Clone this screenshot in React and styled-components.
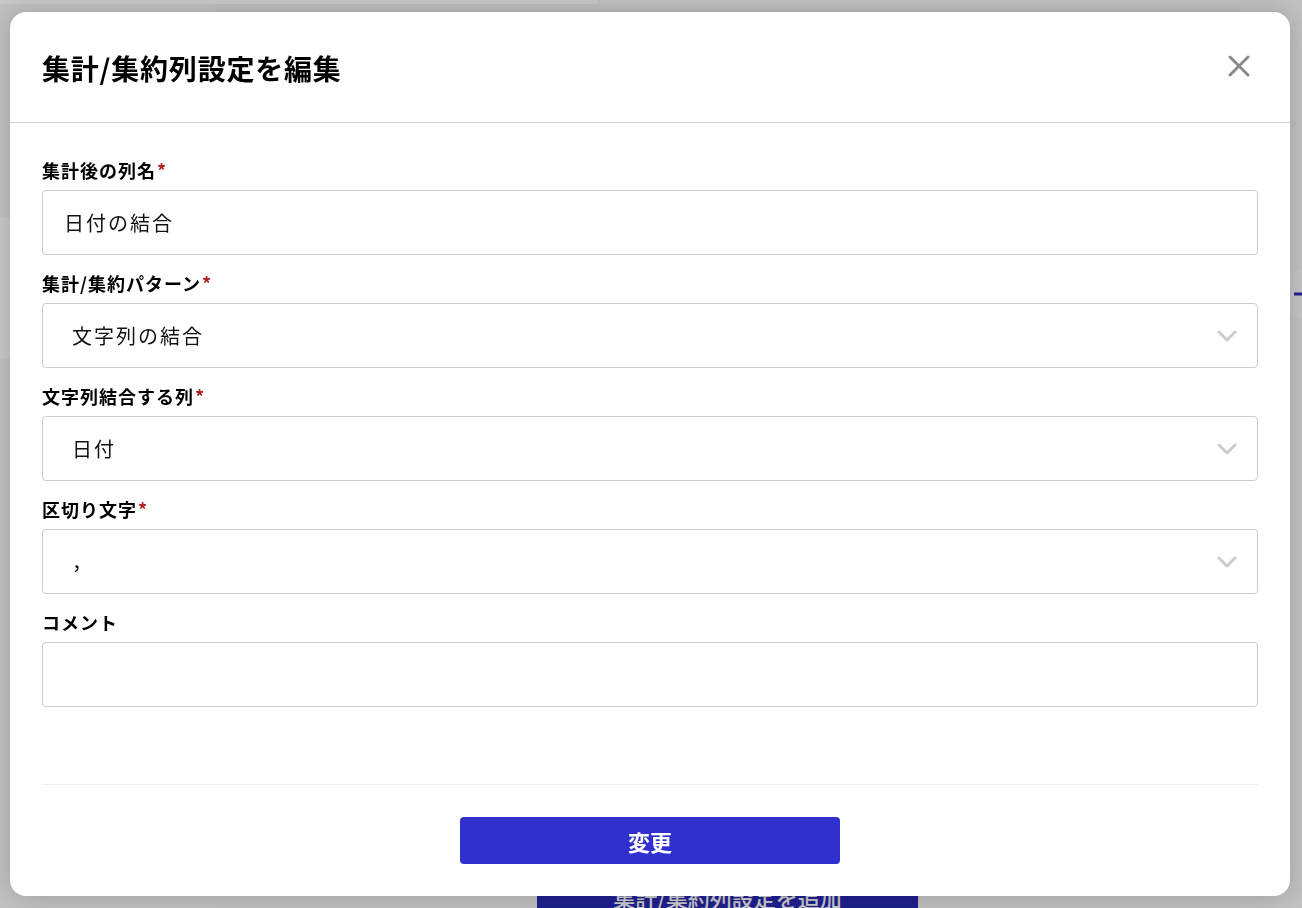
import React from "react";
import styled, { createGlobalStyle } from "styled-components";

const GlobalStyle = createGlobalStyle`
  html, body {
    margin: 0;
    padding: 0;
    font-family: "Noto Sans CJK JP", "Noto Sans", sans-serif;
    color: #111;
  }
  * {
    box-sizing: border-box;
  }
`;

/* page behind the dialog */
const Page = styled.div`
  position: relative;
  width: 1302px;
  height: 908px;
  overflow: hidden;
  background: #f6f6f6;
  display: flex;
  flex-direction: column;
`;

const TopCard = styled.div`
  width: 598px;
  height: 4px;
  background: #fff;
  border-bottom-right-radius: 8px;
`;

const PageBody = styled.div`
  flex: 1;
  display: flex;
`;

const Sidebar = styled.div`
  width: 215px;
  padding-top: 214px;
`;

const SideRow = styled.div`
  height: 140px;
  background: #fff;
`;

const Main = styled.div`
  flex: 1;
  display: flex;
  flex-direction: column;
  align-items: center;
  justify-content: flex-end;
  margin-right: 62px;
  background: #f3f3f3;
`;

const AddButton = styled.button`
  width: 381px;
  height: 46px;
  margin-bottom: -12px;
  border: none;
  border-radius: 4px;
  background: #2828b4;
  color: #fff;
  font-family: inherit;
  font-size: 22px;
  font-weight: 500;
`;

const RoundButton = styled.div`
  position: absolute;
  right: -26px;
  top: 270px;
  width: 48px;
  height: 48px;
  border-radius: 50%;
  background: #fafafa;
  display: flex;
  align-items: center;
  justify-content: center;
`;

/* dialog */
const Overlay = styled.div`
  position: fixed;
  inset: 0;
  padding-right: 2px;
  background: rgba(0, 0, 0, 0.22);
  display: flex;
  align-items: center;
  justify-content: center;
`;

const Modal = styled.div`
  width: 1280px;
  background: #fff;
  border-radius: 16px;
  box-shadow: 0 0 24px rgba(0, 0, 0, 0.18);
  display: flex;
  flex-direction: column;
`;

const Header = styled.div`
  height: 111px;
  padding: 0 31px 0 32px;
  border-bottom: 1px solid #cfcfcf;
  display: flex;
  align-items: center;
  justify-content: space-between;
`;

const Title = styled.h1`
  margin: 2px 0 0;
  font-size: 28px;
  font-weight: 700;
  letter-spacing: 0.8px;
  color: #000;
`;

const CloseButton = styled.button`
  width: 40px;
  height: 40px;
  margin-top: -2px;
  padding: 0;
  border: none;
  background: none;
  display: flex;
  align-items: center;
  justify-content: center;
  cursor: pointer;
`;

const Body = styled.div`
  padding: 35px 32px 0;
  display: flex;
  flex-direction: column;
  gap: 16px;
`;

const Field = styled.div`
  display: flex;
  flex-direction: column;
  gap: 8px;
`;

const Label = styled.label`
  font-size: 18px;
  line-height: 24px;
  font-weight: 700;
  letter-spacing: 1px;
  color: #000;
`;

const Required = styled.span`
  color: #b01e1e;
  margin-left: 1px;
`;

const Box = styled.div`
  height: 65px;
  border: 1px solid #cccccc;
  border-radius: 4px;
  display: flex;
  align-items: center;
  justify-content: space-between;
  padding: 0 20px 0 ${(p) => (p.$select ? 29 : 21)}px;
  font-size: 20px;
  letter-spacing: 2px;
  color: #111;
`;

const Footer = styled.div`
  margin: 77px 32px 0;
  border-top: 1px solid #efefef;
  padding: 32px 0;
  display: flex;
  justify-content: center;
`;

const SubmitButton = styled.button`
  width: 380px;
  height: 47px;
  border: none;
  border-radius: 4px;
  background: #3030cf;
  color: #fff;
  font-family: inherit;
  font-size: 22px;
  font-weight: 600;
  cursor: pointer;
`;

const Chevron = () => (
  <svg width="20" height="12" viewBox="0 0 20 12" fill="none">
    <path d="M2 2l8 8 8-8" stroke="#cccccc" strokeWidth="3" strokeLinecap="round" strokeLinejoin="round" />
  </svg>
);

const CloseIcon = () => (
  <svg width="22" height="22" viewBox="0 0 22 22" fill="none">
    <path d="M2 2l18 18M20 2L2 20" stroke="#8a8a8a" strokeWidth="3" strokeLinecap="round" />
  </svg>
);

const fields = [
  { label: "集計後の列名", required: true, value: "日付の結合" },
  { label: "集計/集約パターン", required: true, value: "文字列の結合", select: true },
  { label: "文字列結合する列", required: true, value: "日付", select: true },
  { label: "区切り文字", required: true, value: "，", select: true },
  { label: "コメント", required: false, value: "" },
];

export default function App() {
  return (
    <>
      <GlobalStyle />
      <Page>
        <TopCard />
        <PageBody>
          <Sidebar>
            <SideRow />
          </Sidebar>
          <Main>
            <AddButton>集計/集約列設定を追加</AddButton>
          </Main>
        </PageBody>
        <RoundButton>
          <svg width="24" height="24" viewBox="0 0 24 24">
            <path d="M12 2v20M2 12h20" stroke="#2a2ab8" strokeWidth="3" />
          </svg>
        </RoundButton>
      </Page>
      <Overlay>
        <Modal>
          <Header>
            <Title>集計/集約列設定を編集</Title>
            <CloseButton aria-label="閉じる">
              <CloseIcon />
            </CloseButton>
          </Header>
          <Body>
            {fields.map((f) => (
              <Field key={f.label}>
                <Label>
                  {f.label}
                  {f.required && <Required>*</Required>}
                </Label>
                <Box $select={f.select}>
                  <span>{f.value}</span>
                  {f.select && <Chevron />}
                </Box>
              </Field>
            ))}
          </Body>
          <Footer>
            <SubmitButton>変更</SubmitButton>
          </Footer>
        </Modal>
      </Overlay>
    </>
  );
}
